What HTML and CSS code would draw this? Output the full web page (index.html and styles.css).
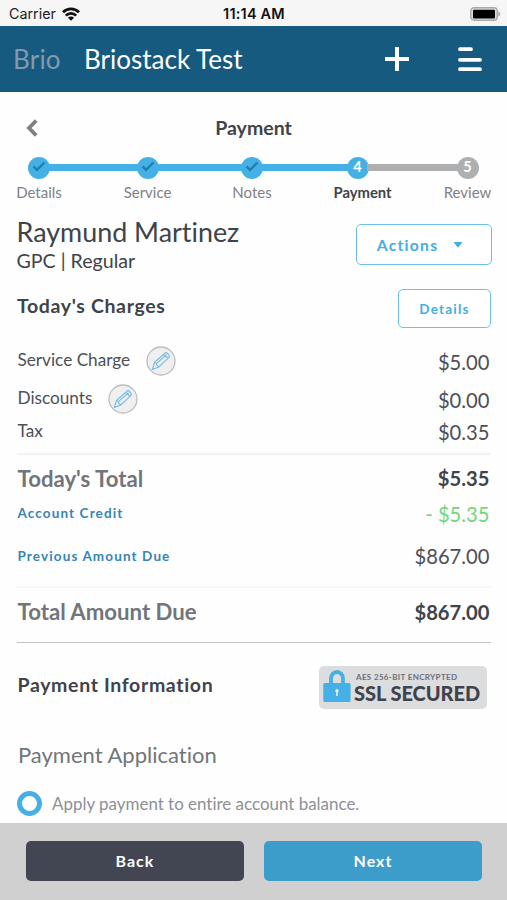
FILE: index.html
```
<!DOCTYPE html>
<html lang="en">
<head>
<meta charset="utf-8">
<title>Payment</title>
<link rel="stylesheet" href="styles.css">
</head>
<body>
<div class="screen">
  <div class="status">
    <div class="carrier"><span>Carrier</span>
      <svg width="18" height="14" viewBox="0 0 18 14" fill="none" stroke="#111" stroke-width="2.7"><path d="M1 5.2C5.600.7 12.400.7 17 5.2"/><path d="M3.800 8.600c3-2.900 7.400-2.900 10.400 0"/><path d="M9 13.800 5.900 10.700c1.800-1.600 4.400-1.600 6.200 0z" fill="#111" stroke="none"/></svg>
    </div>
    <span class="clock">11:14 AM</span>
    <svg class="battery" width="31" height="14" viewBox="0 0 31 14"><rect x=".8" y=".8" width="26.4" height="12.4" rx="3.2" fill="#ddd" stroke="#aaa" stroke-width="1.4"/><rect x="3" y="2.800" width="22" height="8.600" rx="1.2" fill="#000"/><path d="M28.3 4.500c2.600.8 2.600 4.200 0 5z" fill="#aaa"/></svg>
  </div>
  <header class="navbar">
    <span class="brand">Brio</span>
    <span class="company">Briostack Test</span>
    <svg class="plus" width="26" height="26" viewBox="0 0 26 26" stroke="#fff" stroke-width="4"><path d="M1 13h24M13 1v24"/></svg>
    <svg class="menu" width="24" height="26" viewBox="0 0 24 26" stroke="#fff" stroke-width="3.8" stroke-linecap="round"><path d="M2 3.200h11M2 13.800h20M2 23.200h20"/></svg>
  </header>
  <main>
    <div class="page-title">
      <svg width="12" height="18" viewBox="0 0 12 18" fill="none" stroke="#7d7f82" stroke-width="3.8"><path d="M10.200 1.600 3 9l7.200 7.400"/></svg>
      <h1>Payment</h1>
    </div>
    <div class="steps">
      <div class="step"><i><svg width="14" height="11" viewBox="0 0 14 11"><path d="m1.500 5.400 3.500 3.500L12.500 1.500"/></svg></i><span>Details</span></div>
      <b class="line"></b>
      <div class="step"><i><svg width="14" height="11" viewBox="0 0 14 11"><path d="m1.500 5.400 3.500 3.500L12.500 1.500"/></svg></i><span>Service</span></div>
      <b class="line"></b>
      <div class="step"><i><svg width="14" height="11" viewBox="0 0 14 11"><path d="m1.500 5.400 3.500 3.500L12.500 1.500"/></svg></i><span>Notes</span></div>
      <b class="line"></b>
      <div class="step current"><i>4</i><span>Payment</span></div>
      <b class="line todo"></b>
      <div class="step todo"><i>5</i><span>Review</span></div>
    </div>
    <section class="customer">
      <div><h2>Raymund Martinez</h2><p>GPC | Regular</p></div>
      <button class="outline actions">Actions<svg width="10" height="6" viewBox="0 0 10 6"><path d="M.5 0h9L5.700 5q-.7.8-1.400 0z" fill="#45aee0"/></svg></button>
    </section>
    <section class="charges-head">
      <h3>Today's Charges</h3>
      <button class="outline details">Details</button>
    </section>
    <section class="charges">
      <div class="row service"><span>Service Charge</span>
        <svg class="edit" width="30" height="30" viewBox="0 0 30 30" fill="none"><circle cx="15" cy="15" r="14" fill="#efefef" stroke="#bdbdbd" stroke-width="1.300"/><path d="m6.500 23.200 2-6.800L19 7.200q1.300-1 2.400.2l1.500 1.800q1 1.300-.2 2.400L12.800 21zM8.500 16.400l1.800 1.200.8 1.800 1.700 1.600M10.300 17.600 20.500 8.800M18 8.300l3.900 4.100" stroke="#75bfe7" stroke-width="1.200"/></svg>
        <em>$5.00</em></div>
      <div class="row discount"><span>Discounts</span>
        <svg class="edit" width="30" height="30" viewBox="0 0 30 30" fill="none"><circle cx="15" cy="15" r="14" fill="#efefef" stroke="#bdbdbd" stroke-width="1.300"/><path d="m6.500 23.200 2-6.800L19 7.200q1.300-1 2.400.2l1.500 1.800q1 1.300-.2 2.400L12.800 21zM8.500 16.400l1.800 1.200.8 1.800 1.700 1.600M10.300 17.600 20.500 8.800M18 8.300l3.900 4.100" stroke="#75bfe7" stroke-width="1.200"/></svg>
        <em>$0.00</em></div>
      <div class="row tax"><span>Tax</span><em>$0.35</em></div>
    </section>
    <section class="totals">
      <div class="row total"><strong>Today's Total</strong><em>$5.35</em></div>
      <div class="row credit"><a>Account Credit</a><em>- $5.35</em></div>
      <div class="row previous"><a>Previous Amount Due</a><em>$867.00</em></div>
    </section>
    <section class="grand">
      <div class="row total"><strong>Total Amount Due</strong><em>$867.00</em></div>
    </section>
    <section class="payment-info">
      <h3>Payment Information</h3>
      <div class="ssl">
        <svg width="28" height="34" viewBox="0 0 28 34"><path d="M8 15V9.500a6 6.500 0 0 1 12 0V15" fill="none" stroke="#45b0e5" stroke-width="3.800"/><rect x=".3" y="14" width="27.300" height="19" rx="1.600" fill="#45b0e5"/><path d="M14 20a1.900 1.900 0 0 1 .8 3.500V27h-1.600v-3.500A1.900 1.900 0 0 1 14 20z" fill="#eee"/></svg>
        <div><small>AES 256-BIT ENCRYPTED</small><b>SSL SECURED</b></div>
      </div>
    </section>
    <h4>Payment Application</h4>
    <label class="option"><span class="radio"></span><span>Apply payment to entire account balance.</span></label>
  </main>
  <footer><button class="back">Back</button><button class="next">Next</button></footer>
</div>
</body>
</html>
```
FILE: styles.css
```
* { box-sizing: border-box; }
body, h1, h2, h3, h4, p { margin: 0; }
body { font-family: Lato, sans-serif; font-variant-ligatures: none; background: #fefefe; color: #3f434a; }
em, i { font-style: normal; }
svg { display: block; flex: none; }
button { font: inherit; padding: 0; }
span, em, a, strong, h1, h2, h3, h4, button { white-space: nowrap; }

.screen { width: 507px; height: 900px; display: flex; flex-direction: column; overflow: hidden; }
.status { height: 26px; background: #f6f6f6; display: grid; grid-template-columns: 1fr auto 1fr; align-items: center; padding: 1px 6px 0 9px; font: 15px/26px Inter, sans-serif; color: #222; }
.carrier { display: flex; align-items: center; gap: 6px; font-size: 14.300px; }
.carrier svg { margin-top: -1px; }
.clock { font-weight: 600; font-size: 14.500px; letter-spacing: .2px; color: #111; position: relative; left: -1px; }
.battery { justify-self: end; margin-top: -1px; }

.navbar { height: 66px; background: #165a80; display: flex; align-items: center; padding: 0 25px 0 13px; font-size: 26px; color: #fff; }
.brand { color: #8599ab; width: 71px; letter-spacing: .2px; }
.plus { margin-left: auto; margin-right: 48px; }

main { flex: 1; min-height: 0; padding: 0 16px 0 17px; overflow: hidden; }
.page-title { height: 64px; display: grid; grid-template-columns: 30px 1fr 40px; align-items: center; padding: 7px 0 0 9px; }
.page-title h1 { font-size: 19.500px; line-height: 24px; text-align: center; }

.steps { display: grid; grid-template-columns: 22px 86.500px 22px 82.500px 22px 83.500px 22px 88px 22px; height: 60px; padding: 1px 0 0 11px; }
.step { display: flex; flex-direction: column; align-items: center; color: #7e8186; font-size: 15px; line-height: 18px; }
.step i { flex: none; width: 22px; height: 22px; border-radius: 50%; background: #45b0e5; color: #fff; font-weight: 700; font-size: 14.500px; line-height: 20px; text-align: center; display: flex; justify-content: center; }
.step i svg { margin-top: 4px; fill: none; stroke: #207fb0; stroke-width: 2.400; }
.step span { margin-top: 4px; }
.step.current span { font-weight: 700; font-size: 14.800px; color: #3f434a; padding-left: 10px; }
.step.todo i { background: #adafb1; }
.line { height: 7px; margin: 7px -2px 0; background: #45b0e5; }
.line.todo { background: #adafb1; }

.customer { display: flex; justify-content: space-between; height: 68px; margin-right: -1px; }
.customer h2 { font-weight: 400; font-size: 26.900px; line-height: 32px; margin-left: -.5px; }
.customer p { font-size: 19.600px; line-height: 26px; margin-left: -.5px; }
.outline { border: 1.500px solid #6fc0e6; border-radius: 5px; background: #fff; color: #45aee0; font-weight: 700; display: flex; align-items: center; justify-content: center; }
.actions { width: 136px; height: 41px; margin-top: 8px; font-size: 15.700px; letter-spacing: 1.250px; gap: 15px; padding-right: 8px; }
.charges-head { display: flex; justify-content: space-between; height: 59px; padding: 5px 0 0; }
h3 { font-size: 19.500px; line-height: 24px; letter-spacing: .65px; }
.charges-head h3 { margin-top: 5px; }
.details { width: 93px; height: 39px; font-size: 13.500px; letter-spacing: 1.200px; }

.row { display: flex; align-items: center; padding: 0 1.500px 0 0.500px; color: #4d5057; font-size: 17.200px; line-height: 24px; }
.row em { margin-left: auto; font-size: 20.200px; position: relative; top: 1px; }
.row > span { position: relative; top: -1px; }
.edit { margin-left: 15.500px; }
.charges { height: 113px; border-bottom: 2px solid #f3f3f4; }
.service { height: 38px; margin-top: -1px; }
.discount { height: 38px; }
.tax { height: 27px; }
.tax em { top: 0; }
.totals { height: 133px; border-bottom: 2px solid #f7f7f8; }
.row strong { font-size: 22.200px; color: #72757a; }
.row.total em { font-weight: 700; color: #3f434a; top: -.5px; }
.totals .total { height: 47px; }
.credit { height: 22px; }
.previous { height: 63px; }
.row a { font-size: 13.500px; font-weight: 700; color: #3585b5; letter-spacing: 1.120px; }
.row.previous em { top: 0; }
.credit em { color: #72d779; }
.grand { height: 55px; border-bottom: 1px solid #c4c5c7; }
.grand .row { height: 48px; }
.payment-info { display: flex; align-items: center; justify-content: space-between; height: 88px; padding: 0 4px 0 .5px; }
.payment-info h3 { margin-top: -5px; }
.ssl { width: 168px; height: 43px; border-radius: 5px; background: #dcddde; display: flex; padding: 3px 0 0 4px; gap: 3px; color: #3f434d; }
.ssl small, .ssl b { display: block; white-space: nowrap; }
.ssl small { font-size: 8px; line-height: 10px; font-weight: 700; letter-spacing: .35px; margin: 3px 0 0 2px; color: #6d7077; }
.ssl b { font-size: 20px; line-height: 20px; margin-top: 1px; font-weight: 900; letter-spacing: -.05px; }
h4 { font-weight: 400; font-size: 22px; line-height: 28px; color: #72757a; margin: 10px 0 0 1px; }
.option { display: flex; align-items: center; gap: 10px; margin-top: 22px; font-size: 16.950px; line-height: 24px; color: #8d9095; }
.radio { width: 25px; height: 25px; border: 5px solid #45b0e5; border-radius: 50%; background: #fff; }

footer { height: 77px; background: #d0d0d0; display: flex; gap: 20px; padding: 18px 25px 0 26px; }
footer button { flex: 1; height: 40px; border: 0; border-radius: 5px; color: #fff; font-size: 16px; line-height: 20px; font-weight: 700; letter-spacing: 1px; padding: 0 0 1px; }
.back { background: #424652; }
.next { background: #3d9dca; }
```
